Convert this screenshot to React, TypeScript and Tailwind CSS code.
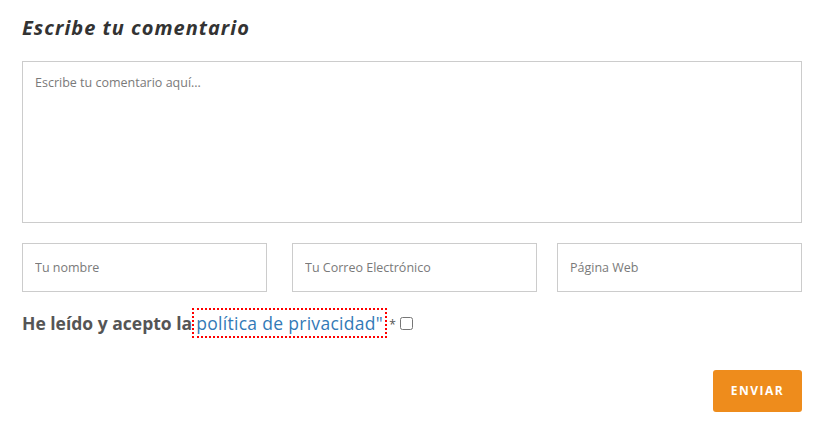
import React from "react";

const body = { fontFamily: "'Open Sans', 'Noto Sans', sans-serif" };

const Field = ({ placeholder, className }: { placeholder: string; className?: string }) => (
	<input
		type="text"
		placeholder={placeholder}
		className={`h-[49px] w-[245px] border border-[#cccccc] bg-white px-[12px] text-[12.5px] text-[#555] placeholder:text-[#7a7a7a] outline-none ${className ?? ""}`}
		style={body}
	/>
);

export default function App() {
	return (
		<div className="bg-white w-[829px] h-[426px] pl-[22px] pt-[14px]">
			<h3
				className="text-[20px] font-bold italic tracking-[1px] text-[#333] leading-[28px]"
				style={{ fontFamily: "'Open Sans', sans-serif" }}
			>
				Escribe tu comentario
			</h3>
			<form className="flex flex-col">
				<textarea
					placeholder="Escribe tu comentario aquí..."
					className="mt-[19px] h-[162px] w-[780px] resize-none border border-[#cccccc] bg-white px-[12px] py-[12px] text-[12.5px] text-[#555] placeholder:text-[#7a7a7a] outline-none"
					style={body}
				/>
				<div className="mt-[20px] flex">
					<Field placeholder="Tu nombre" />
					<Field placeholder="Tu Correo Electrónico" className="ml-[25px]" />
					<Field placeholder="Página Web" className="ml-[20px]" />
				</div>
				<div className="mt-[16px] flex items-center text-[17.5px] leading-[26px] text-[#555]" style={body}>
					<span className="font-bold">He leído y acepto la</span>
					<a
						href="#"
						className="px-[4px] py-[2px] tracking-[0.3px] text-[#337ab7] outline-2 outline-dotted outline-[#ff0000] -outline-offset-2"
					>
						política de privacidad"
					</a>
					<span className="ml-[2px] self-start mt-[4px] text-[12px]">*</span>
					<input type="checkbox" className="ml-[4px] h-[13px] w-[13px]" />
				</div>
				<div className="mt-[32px] flex w-[780px] justify-end">
					<button
						type="button"
						className="h-[42px] w-[89px] rounded-[3px] bg-[#ee8c1c] text-[12px] font-bold tracking-[1.5px] text-white"
						style={{ fontFamily: "'Open Sans', sans-serif" }}
					>
						ENVIAR
					</button>
				</div>
			</form>
		</div>
	);
}
